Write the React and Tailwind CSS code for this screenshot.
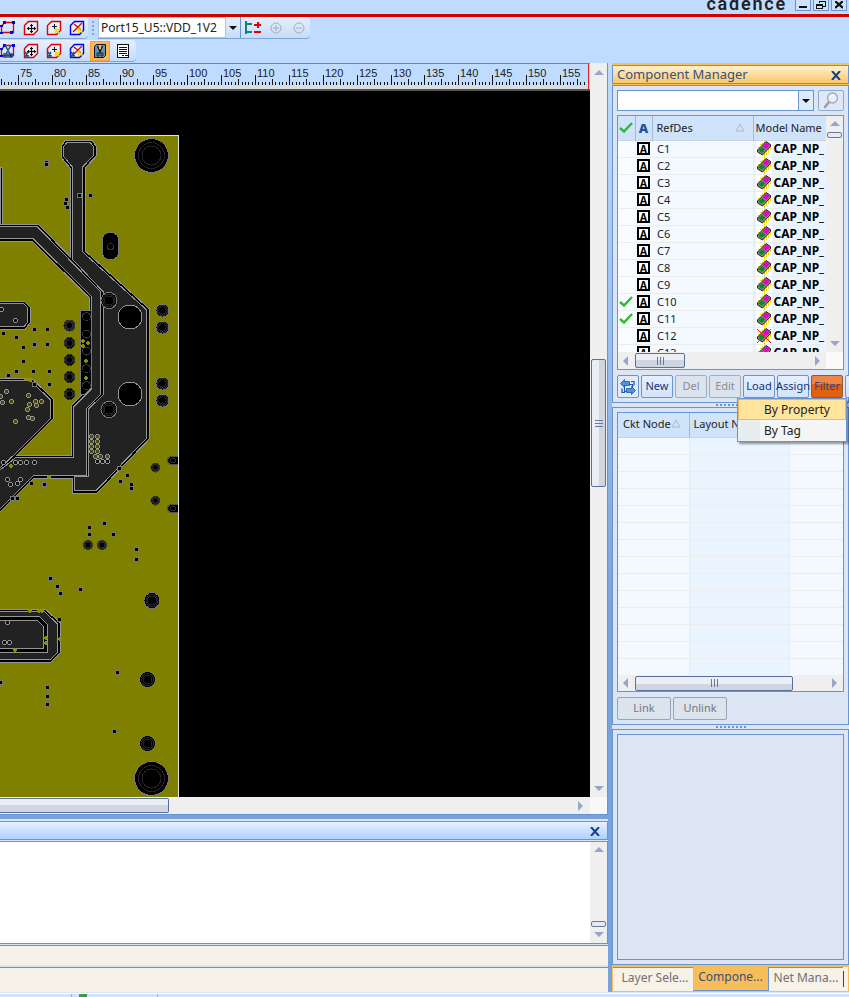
const rows = ['C1', 'C2', 'C3', 'C4', 'C5', 'C6', 'C7', 'C8', 'C9', 'C10', 'C11', 'C12', 'C13'];
const checked = ['C10', 'C11'];

const pours = [
  '-8,227 37,227 100,292 100,394 86,408 86,475 33,475 -8,516 -8,477 16,458 74,458 74,407 92,389 92,296 33,238 -8,238',
  '64,147 67,143 90,143 93,147 93,155 82,167 82,252 146,310 146,438 96,490 75,490 75,477 89,477 89,409 104,395 104,292 73,259 73,167 64,156',
  '-8,381 30,381 50,400 50,418 12,456 -8,475',
  '-8,304 23,304 27,308 27,322 24,326 -8,326',
  '-8,612 44,612 57,624 57,652 50,659 -8,659',
];

const pads = [
  [151.5, 155.5, 17], [151.5, 778.5, 17], [109, 300.5, 8], [109, 409.5, 8],
  [162.5, 310.5, 6.5], [162.5, 327.5, 6.5], [162.5, 383.5, 6.5], [162.5, 400.5, 6.5],
  [69.5, 325.5, 5.5], [69.5, 343, 5.5], [69.5, 360, 5.5], [69.5, 377, 5.5], [69.5, 394, 5.5],
  [155.5, 467.5, 4.5], [155.5, 500.5, 4.5], [88, 545, 4.5], [102, 545, 4.5],
  [152, 600.5, 8], [147.5, 679.5, 8], [147.5, 743.5, 8],
];

const dots = [
  [46, 162], [46, 164], [66, 199], [65, 203], [67, 207], [79, 195], [90, 195], [34, 329], [47, 329], [34, 344], [47, 344],
  [16, 337], [23, 347], [23, 361], [16, 371], [33, 371], [49, 371], [49, 384], [34, 384], [8, 375], [127, 475],
  [120, 481], [131, 484], [131, 488], [89, 527], [89, 534], [104, 523], [113, 534], [136, 549], [136, 559],
  [50, 578], [44, 484], [31, 483], [12, 498], [17, 498], [57, 586], [60, 593], [80, 589], [59, 619],
  [117, 672], [0, 682], [47, 687], [47, 696], [47, 704], [114, 731], [119, 468], [3, 333],
];

const vias = [
  [6, 391], [2, 402], [11, 401], [0, 396], [28, 395], [29, 404], [35, 401], [36, 405], [41, 401], [27, 409], [28, 417],
  [32, 418], [15, 421], [3, 462], [15, 462], [20, 462], [26, 462], [34, 462], [7, 479], [10, 484], [17, 483],
  [20, 479], [91, 436], [97, 436], [91, 441], [97, 441], [91, 446], [97, 446], [91, 451], [97, 451], [95, 456],
  [100, 456], [107, 456], [97, 461], [102, 461], [107, 461], [1, 309], [15, 320], [7, 622], [4, 642], [9, 642],
];

const sparks = [
  [82, 340], [87, 342], [82, 345], [85, 360], [85, 377], [10, 465], [48, 476], [29, 379], [25, 378],
  [29, 610], [38, 610], [41, 610], [45, 637], [45, 642], [14, 649], [59, 638],
];

function Board() {
  return (
    <svg width="590" height="706" viewBox="0 91 590 706" shapeRendering="crispEdges" className="block max-w-none">
      <rect x="-2" y="135.5" width="180.5" height="680" fill="#808000" stroke="#e4e4e4" />
      <path d="M0 167h2v60h-2z" fill="#000" stroke="#909090" />
      {pours.map((p) => (
        <polygon key={p} points={p} fill="none" stroke="#949494" strokeWidth="7" />
      ))}
      {pours.map((p) => (
        <polygon key={p} points={p} fill="none" stroke="#000" strokeWidth="5" />
      ))}
      {pours.map((p) => (
        <g key={p}>
          <polygon points={p} fill="none" stroke="#949494" strokeWidth="2" />
          <polygon points={p} fill="#222" />
        </g>
      ))}
      <g fill="none">
        <path d="M-5 618h43l7 7v25h-50" stroke="#949494" strokeWidth="5" />
        <path d="M-5 618h43l7 7v25h-50" stroke="#000" strokeWidth="3" />
      </g>
      <path d="M80.500 310.500h11v77l-7 7h-4z" fill="#000" stroke="#777" />
      {[316.5, 334, 351, 368.5, 385.5].map((y) => (
        <circle key={y} cx="86.5" cy={y} r="4" fill="#000" stroke="#3a3a3a" />
      ))}
      {[317, 394].map((y) => (
        <circle key={y} cx="130" cy={y} r="12" fill="#000" stroke="#949494" />
      ))}
      {pads.map(([x, y, r]) => (
        <g key={x + '-' + y} fill="none" stroke="#262626">
          <circle cx={x} cy={y} r={r} fill="#000" stroke={r < 6 ? '#333' : '#777'} />
          <circle cx={x} cy={y} r={r * 0.76} />
          <circle cx={x} cy={y} r={r * 0.56} />
        </g>
      ))}
      <rect x="102.500" y="232.500" width="16" height="27" rx="7" fill="#000" stroke="#777" />
      <circle cx="110.500" cy="246.500" r="3" fill="none" stroke="#333" />
      {[456.5, 504.5].map((y) => (
        <g key={y} fill="#000" stroke="#555">
          <path d={`M178 ${y}h-8l-3 3v2l3 3h8`} />
          <circle cx="173" cy={y + 4} r="2.5" stroke="#333" />
        </g>
      ))}
      {dots.map(([x, y]) => (
        <g key={x + '-' + y}>
          <rect x={x - 2} y={y - 2} width="5" height="5" rx="1" fill="#777" />
          <rect x={x - 1} y={y - 1} width="3" height="3" fill="#000" />
        </g>
      ))}
      {vias.map(([x, y]) => (
        <circle key={x + '-' + y} cx={x + 0.5} cy={y + 0.5} r="2" fill={y > 385 && y < 458 ? '#4c4c08' : '#111'} stroke="#949494" />
      ))}
      {sparks.map(([x, y]) => (
        <path key={x + '-' + y} d={`M${x - 1} ${y}h4v2h-4zM${x} ${y - 1}h2v4h-2z`} fill="#8f8f00" />
      ))}
    </svg>
  );
}

const STEP = 33.87;

function Ruler() {
  const ticks = [];
  for (let i = -6; i < 168; i++) {
    ticks.push({ x: Math.round(18 + (i * STEP) / 10), h: i % 10 === 0 ? 10 : i % 5 === 0 ? 6 : 3 });
  }
  const labels = [];
  for (let n = 0; n < 17; n++) labels.push({ x: Math.round(20 + n * STEP), v: 75 + n * 5 });
  return (
    <div className="h-7 shrink-0 overflow-hidden border-t border-b-2 border-t-[#808080] border-b-[#555] bg-[#dcdcdc]">
      <svg width="590" height="25" className="block max-w-none">
        <rect width="590" height="21" fill="#bfdbff" />
        <g shapeRendering="crispEdges">
          {ticks.map((t) => (
            <rect key={t.x} x={t.x} y={21 - t.h} width="1" height={t.h} fill="#111" />
          ))}
        </g>
        {labels.map((l) => (
          <text key={l.v} x={l.x} y="13" fontSize="11" fontFamily="Liberation Sans, sans-serif" fill="#222">{l.v}</text>
        ))}
        <rect x="588" width="1" height="25" fill="#e02020" />
      </svg>
    </div>
  );
}

const arrowShapes = {
  up: 'M4 0L9 5H-1z',
  down: 'M4 5L9 0H-1z',
  left: 'M0 4L5 -1V9z',
  right: 'M5 4L0 -1V9z',
};

function Arrow({ dir, label }) {
  return (
    <button aria-label={label || dir} className="flex h-4 w-4 shrink-0 items-center justify-center">
      <svg width="10" height="10" viewBox={dir === 'up' || dir === 'down' ? '-1 -2 10 10' : '-2 -1 10 10'}>
        <path d={arrowShapes[dir]} fill="#98a5cb" />
      </svg>
    </button>
  );
}

function Grip({ vertical }) {
  return (
    <span className={vertical ? 'flex flex-col gap-0.5' : 'flex gap-0.5'}>
      {[0, 1, 2].map((i) => (
        <span key={i} className={vertical ? 'h-px w-2 bg-[#66789f]' : 'h-2 w-px bg-[#66789f]'} />
      ))}
    </span>
  );
}

const hThumb = 'flex h-[15px] items-center justify-center rounded-xs border border-[#5a6f9f] bg-linear-to-b from-[#eceef3] from-50% to-[#cfd6e2] to-50%';

const vTrack = 'flex w-[17px] shrink-0 flex-col items-center bg-[#efefef]';
const vThin = 'h-1.5 w-[15px] rounded-xs border border-[#66789f] bg-[#e6e9f0]';

/* toolbar glyphs */

function Shape({ variant, color, cut }) {
  return (
    <svg width="16" height="16" viewBox="0 0 16 16" fill="none">
      {variant === 'nodes' ? (
        <>
          <path d="M4.500 2.500h9v10h-12v-6z" stroke="#e00000" strokeWidth="1.300" />
          <path d="M3 1h3v3H3zM12 1h3v3h-3zM10 11h3v3h-3zM0 12h3v2H0zM0 5h3v2H0z" fill="#0000e0" />
        </>
      ) : (
        <path d="M5.500 1.500h9v9l-4 4h-9v-9z" stroke={color} strokeWidth="1.400" fill="#e7effb" />
      )}
      {variant === 'move' && (
        <path d="M8.500 4v9M4 8.500h9M7 5.500h3M7 11.500h3M5.500 7v3M11.500 7v3" stroke="#111" strokeWidth="1.200" />
      )}
      {variant === 'point' && (
        <>
          <path d="M9 9l5 5M9.500 8v5M9 9.500h5" stroke="#f0e000" strokeWidth="1.500" />
          <path d="M8 4v5h1V4zM6 6v1h5V6z" fill="#111" />
        </>
      )}
      {variant === 'slash' && (
        <>
          <path d="M4 12l9-9M5 4l7 6" stroke="#e00000" strokeWidth="1.300" />
          <path d="M9 8l5 5M9.500 9v4" stroke="#f0e000" strokeWidth="1.500" />
        </>
      )}
      {cut && variant === 'nodes' && (
        <path d="M5 2l5 9M11 2L6 11M4 11h3v3H4zM9 11h3v3H9z" stroke="#24507c" strokeWidth="1.500" />
      )}
      {cut && variant !== 'nodes' && (
        <path d="M1 8l4 5M5 9l-3 5M1 13h2v2M4 13h2" stroke="#24507c" strokeWidth="1.500" />
      )}
    </svg>
  );
}

function ToolButton({ label, children }) {
  return <button aria-label={label} className="flex h-5 w-[23px] shrink-0 items-center justify-center">{children}</button>;
}

const tools = [
  { variant: 'nodes', color: '#e00000' },
  { variant: 'move', color: '#e00000' },
  { variant: 'point', color: '#e00000' },
  { variant: 'slash', color: '#0000e0' },
];

const barFill = 'flex h-[22px] items-center rounded-r-sm border-b border-[#7fa4d8] bg-linear-to-b from-[#e6f0fd] to-[#c6dcfb]';

function Toolbars() {
  return (
    <div className="flex h-[46px] shrink-0 flex-col gap-px bg-[#bfdbff]">
      <div className="flex">
        <div className={barFill}>
          <div className="-ml-1 flex">
            {tools.map((t) => (
              <ToolButton key={t.variant} label={t.variant}><Shape {...t} /></ToolButton>
            ))}
          </div>
        </div>
        <div className="flex w-2.5 flex-col items-center justify-center gap-0.5">
          {[0, 1, 2, 3].map((i) => <span key={i} className="h-0.5 w-0.5 bg-[#7fa4d8]" />)}
        </div>
        <div className={barFill}>
          <input
            aria-label="Port"
            defaultValue="Port15_U5::VDD_1V2"
            className="h-[21px] w-32 border border-[#a9c6ee] bg-white pl-0.5 text-[12px] text-[#222] outline-none"
          />
          <button aria-label="Choose port" className="flex h-[21px] w-[15px] items-center justify-center border-r border-[#6a94d0]">
            <svg width="8" height="4"><path d="M0 0h8L4 4z" fill="#111" /></svg>
          </button>
          <ToolButton label="Port polarity">
            <svg width="18" height="14" viewBox="0 0 18 14" fill="none" shapeRendering="crispEdges">
              <path d="M2 0v13M2 3h6M2 11h6" stroke="#0d8080" strokeWidth="2" />
              <path d="M10 4h7M13.500 1v6M10 11h7" stroke="#e00000" strokeWidth="2" />
            </svg>
          </ToolButton>
          <ToolButton label="Zoom in">
            <svg width="12" height="12" viewBox="0 0 12 12" fill="none" stroke="#a9acb2"><circle cx="6" cy="6" r="5" /><path d="M3 6h6M6 3v6" /></svg>
          </ToolButton>
          <ToolButton label="Zoom out">
            <svg width="12" height="12" viewBox="0 0 12 12" fill="none" stroke="#a9acb2"><circle cx="6" cy="6" r="5" /><path d="M3 6h6" /></svg>
          </ToolButton>
        </div>
      </div>
      <div className="flex">
        <div className={barFill}>
          <div className="-ml-1 flex">
            {tools.map((t) => (
              <ToolButton key={t.variant} label={'cut ' + t.variant}><Shape {...t} cut /></ToolButton>
            ))}
          </div>
          <button aria-label="Cut mode" className="ml-0.5 flex h-5 w-5 items-center justify-center border border-[#f0a040] bg-[#ffb457]">
            <svg width="14" height="16" viewBox="0 0 14 16" fill="none">
              <path d="M3.500 1.500h9v11l-2 2h-9v-11z" fill="#5f96b4" stroke="#111" />
              <path d="M4.500 3l3 7M9.500 3l-3 7" stroke="#111" strokeWidth="1.200" />
              <path d="M6 2h2v4H6z" fill="#ffb457" />
              <path d="M4 10h2v3H4zM8 10h2v3H8z" stroke="#111" strokeWidth="0.800" fill="#5f96b4" />
            </svg>
          </button>
          <button aria-label="Report" className="mx-1 flex h-5 w-[18px] items-center justify-center">
            <svg width="14" height="16" viewBox="0 0 14 16" shapeRendering="crispEdges">
              <path d="M1.500 1.500h11v13h-11z" fill="#fff" stroke="#111" />
              <path d="M3 4.500h8M3 6.500h8M3 8.500h8M3 10.500h8M6 12.500h2M9 12.500h3" stroke="#111" />
            </svg>
          </button>
        </div>
      </div>
    </div>
  );
}

function TitleBar() {
  const winButton = 'flex h-[11px] w-4 items-center justify-center border border-t-0 border-[#6a94d0] bg-[#cfe2fc]';
  return (
    <header className="flex h-[17px] shrink-0 items-start justify-end overflow-hidden border-b-3 border-[#d00000] bg-[#bfdbff] pr-0.5">
      <span className="-mt-2 mr-2 font-[Roboto,sans-serif] text-[18px] leading-6 font-semibold tracking-widest text-[#222]">cadence</span>
      <div className="flex gap-0.5">
        <button aria-label="Minimize" className={winButton}><svg width="8" height="8"><path d="M0 5h8v2H0z" fill="#111" /></svg></button>
        <button aria-label="Restore" className={winButton}>
          <svg width="10" height="9" fill="none" stroke="#111" shapeRendering="crispEdges"><path d="M3.500 2V0.500h6v5H7M0.500 3.500h6v4h-6zM1 4.500h6" /></svg>
        </button>
        <button aria-label="Close" className={winButton}><svg width="8" height="8"><path d="M0 0l8 7M8 0L0 7" stroke="#111" strokeWidth="2.200" /></svg></button>
      </div>
    </header>
  );
}

function CloseX({ label }) {
  return (
    <button aria-label={label} className="flex h-4 w-5 items-center justify-center">
      <svg width="10" height="9" viewBox="0 0 10 9"><path d="M1 0l8 9M9 0L1 9" stroke="#173f86" strokeWidth="2" /></svg>
    </button>
  );
}

function Workspace() {
  return (
    <div className="flex min-w-0 flex-1 flex-col">
      <div className="flex min-h-0 flex-1 border-r border-b border-[#6a94d0]">
        <div className="flex min-w-0 flex-1 flex-col">
          <Ruler />
          <div className="min-h-0 flex-1 overflow-hidden bg-black"><Board /></div>
          <div className="flex h-[17px] shrink-0 items-center bg-[#efefef] pr-px">
            <span className={hThumb + ' w-[169px] rounded-l-none border-l-0'} />
            <span className="flex-1" />
            <Arrow dir="right" label="Scroll right" />
          </div>
        </div>
        <div className={vTrack + ' pt-0.5'}>
          <Arrow dir="up" label="Scroll up" />
          <span className="h-[278px]" />
          <span className="flex h-32 w-[15px] items-center justify-center rounded-xs border border-[#5a6f9f] bg-linear-to-r from-[#eceef3] from-50% to-[#cfd6e2] to-50%">
            <Grip vertical />
          </span>
          <span className="flex-1" />
          <Arrow dir="down" label="Scroll down" />
          <span className="h-[17px] w-full bg-[#f8f8f8]" />
        </div>
      </div>
      <div className="h-1 shrink-0 bg-[#78a2dc]" />
      <div className="h-0.5 shrink-0 bg-[#dbe5f3]" />
      <div className="flex h-[19px] shrink-0 items-end justify-end border border-l-0 border-[#6a94d0] bg-linear-to-b from-[#e6f1ff] to-[#b0d1fd] pr-0.5">
        <CloseX label="Close output" />
      </div>
      <div className="mt-px flex h-[103px] shrink-0 border border-l-0 border-[#6a94d0]">
        <textarea aria-label="Output" readOnly className="min-w-0 flex-1 resize-none bg-white outline-none" />
        <div className={vTrack}>
          <Arrow dir="up" />
          <span className="flex-1" />
          <span className={vThin} />
          <Arrow dir="down" />
        </div>
      </div>
      <div className="mt-px h-5 shrink-0 border-t border-[#6a94d0] bg-[#f6f2e8]" />
      <div className="mt-0.5 h-[25px] shrink-0 border-t border-[#6a94d0] bg-[#f6f2e8]" />
    </div>
  );
}

function Check() {
  return (
    <svg width="14" height="11" viewBox="0 0 14 11" className="ml-px block">
      <path d="M1 6l4 3.500L13 1" fill="none" stroke="#2bbd2b" strokeWidth="2.400" />
    </svg>
  );
}

function Chip({ crossed }) {
  return (
    <svg width="16" height="16" viewBox="0 0 16 16" className="block shrink-0 bg-white">
      <path d="M1 8.500h2M2 6.500h2M4 3.500h2M6.500 1.500v2M8.500 0v2" stroke="#e8d800" fill="none" />
      <path d="M14.500 5v4M12.500 8v4M10.500 10v4M8.500 12v4" stroke="#e8d800" fill="none" />
      <path d="M10 0.500l4.500 3v2L6.500 14l-5-3V9z" fill="#8a8a8a" stroke="#222" />
      <path d="M10 1.500l4 2.500-3.500 4L6.500 5.500z" fill="#e800c8" />
      <path d="M6 6l3.500 2.500L6 12 2.500 9.500z" fill="#0a8a20" />
      {crossed && <path d="M1 1l14 14M15 1L1 15" stroke="#f02020" />}
    </svg>
  );
}

function SortMark() {
  return <svg width="10" height="9" fill="none" className="shrink-0"><path d="M5 1l4 7H1z" stroke="#aab9cc" /></svg>;
}

function ComponentTable() {
  return (
    <div className="flex h-[255px] shrink-0 flex-col border border-[#6a94d0] bg-[#f4f9ff]">
      <div className="flex min-h-0 flex-1">
        <div className="min-w-0 flex-1 overflow-hidden">
          <table className="w-full table-fixed border-collapse text-[11px] leading-4 text-[#222]">
            <colgroup>
              <col className="w-[17px]" />
              <col className="w-[17px]" />
              <col className="w-[101px]" />
              <col />
            </colgroup>
            <thead>
              <tr className="h-6 border-b border-[#c8d4e2] bg-linear-to-b from-[#cfe5ff] to-[#cfe2f6] text-left">
                <th aria-label="Assigned" className="border-r border-[#a9b8cc]"><Check /></th>
                <th className="border-r border-[#a9b8cc] text-center text-[13px] font-black text-[#28509a]">A</th>
                <th className="border-r border-[#a9b8cc] pr-2 pl-1 font-normal">
                  <span className="flex items-center justify-between">RefDes <SortMark /></span>
                </th>
                <th className="overflow-hidden pl-0.5 font-normal whitespace-nowrap">Model Name</th>
              </tr>
            </thead>
            <tbody>
              {rows.map((r) => (
                <tr key={r} className="h-[17px] border-b border-[#ececec]">
                  <td className="bg-[#f8fbff]">{checked.includes(r) && <Check />}</td>
                  <td>
                    <span className="mx-auto flex h-[13px] w-[13px] items-center justify-center border-2 border-black bg-white text-[10px] leading-3 font-bold text-black">A</span>
                  </td>
                  <td className="border-r border-[#ececec] pl-[5px]">{r}</td>
                  <td className="overflow-hidden bg-[#e9f4ff] pl-0.5 whitespace-nowrap">
                    <span className="flex h-4 items-center gap-0.5 text-[12px] font-bold text-black">
                      <Chip crossed={r === 'C12'} />CAP_NP_
                    </span>
                  </td>
                </tr>
              ))}
            </tbody>
          </table>
        </div>
        <div className={vTrack}>
          <Arrow dir="up" />
          <span className={vThin} />
          <span className="flex-1" />
          <Arrow dir="down" />
        </div>
      </div>
      <div className="flex h-[17px] shrink-0 items-center bg-[#efefef]">
        <Arrow dir="left" />
        <span className={hThumb + ' ml-px w-[50px]'}><Grip /></span>
        <span className="flex-1" />
        <Arrow dir="right" />
        <span className="h-full w-[17px] bg-[#fafafa]" />
      </div>
    </div>
  );
}

const btn = 'flex h-[23px] w-8 shrink-0 items-center justify-center rounded-xs border text-[11px] whitespace-nowrap';
const btnOn = btn + ' border-[#6a94d0] bg-linear-to-b from-[#e6f0fd] to-[#d2e3fa] text-[#15357a]';
const btnOff = btn + ' border-[#a3aebd] bg-[#dbe3ed] text-[#8a8d92]';
const linkBtn = 'h-[23px] w-[54px] rounded-xs border border-[#98a6b8] bg-[#dbe3ed] text-[11px] text-[#75777c]';

function ButtonRow() {
  return (
    <div className="relative mt-[5px]">
      <div className="-mr-[5px] flex gap-0.5 overflow-hidden">
        <button aria-label="Refresh" className="flex h-[23px] w-[22px] shrink-0 items-center justify-center rounded-xs border border-[#6a94d0] bg-[#dfeafa]">
          <svg width="16" height="16" viewBox="0 0 16 16" fill="#4f93dc" stroke="#1d559f" strokeWidth="0.800">
            <path d="M4.500 5.500h8v7h-8z" fill="#dfeafa" strokeWidth="1.200" />
            <path d="M0.500 4.500l4-4v2h5v4h-5v2z" />
            <path d="M15.500 11.500l-4-4v2h-5v4h5v2z" />
            <path d="M2 9.500v4h3M14 6.500v-4h-3" fill="none" strokeWidth="1.200" />
          </svg>
        </button>
        <button className={btnOn}>New</button>
        <button disabled className={btnOff}>Del</button>
        <button disabled className={btnOff}>Edit</button>
        <button className={btnOn}>Load</button>
        <button className={btnOn}>Assign</button>
        <button className={btn + ' border-[#8a5a3a] bg-linear-to-b from-[#ee8548] from-40% to-[#e2600e] to-40% text-[#3a4474]'}>Filter</button>
        <button aria-label="Tag" className={btnOn} />
      </div>
      <div role="menu" className="absolute top-[23px] -right-[3px] z-10 w-[110px] border border-[#6a94d0] bg-[#f5f5f5] shadow-[2px_2px_2px_rgba(0,0,0,0.4)]">
        <button role="menuitem" className="block h-[21px] w-full border border-[#f0b860] bg-[#ffe49c] pl-[25px] text-left text-[12px] leading-4 text-[#222]">By Property</button>
        <button role="menuitem" className="block h-[21px] w-full border-l-[22px] border-[#e8eeef] pl-1 text-left text-[12px] leading-4 text-[#222]">By Tag</button>
      </div>
    </div>
  );
}

function Splitter() {
  return (
    <div className="flex h-1 shrink-0 items-center justify-center gap-0.5 bg-[#dbe5f3]">
      {[0, 1, 2, 3, 4, 5, 6, 7].map((i) => <span key={i} className="h-0.5 w-0.5 bg-[#6a94d0]" />)}
    </div>
  );
}

function NodeTable() {
  const lines = Array.from({ length: 14 }, (_, i) => i);
  return (
    <div className="flex h-[280px] shrink-0 flex-col border border-[#6a94d0] bg-[#f4f9ff]">
      <div className="min-h-0 flex-1 overflow-hidden">
        <table className="w-full table-fixed border-collapse text-[11px] leading-4 text-[#222]">
          <colgroup>
            <col className="w-[71px]" />
            <col className="w-[100px]" />
            <col />
          </colgroup>
          <thead>
            <tr className="h-6 border-b border-[#c8d4e2] bg-linear-to-b from-[#cfe5ff] to-[#cfe2f6] text-left">
              <th className="border-r border-[#a9b8cc] pb-0.5 pl-[5px] font-normal whitespace-nowrap">
                <span className="flex items-center">Ckt Node <SortMark /></span>
              </th>
              <th className="border-r border-[#a9b8cc] pb-0.5 pl-1 font-normal">Layout Node</th>
              <th />
            </tr>
          </thead>
          <tbody>
            {lines.map((i) => (
              <tr key={i} className="h-[17px] border-b border-[#ececec]">
                <td className="border-r border-[#ececec]" />
                <td className="border-r border-[#ececec] bg-[#e9f4ff]" />
                <td />
              </tr>
            ))}
          </tbody>
        </table>
      </div>
      <div className="flex h-4 shrink-0 items-center bg-[#efefef]">
        <Arrow dir="left" />
        <span className={hThumb + ' ml-px w-[158px]'}><Grip /></span>
        <span className="flex-1" />
        <Arrow dir="right" />
      </div>
    </div>
  );
}

function ComponentManager() {
  const tab = 'h-6 pb-1 text-[12px] whitespace-nowrap';
  return (
    <aside className="flex w-[237px] shrink-0 flex-col bg-[#dbe5f3]">
      <div className="h-0.5 shrink-0 bg-[#f7bd58]" />
      <div className="flex h-[19px] shrink-0 items-end justify-between border border-[#6a94d0] bg-linear-to-b from-[#fff1cf] to-[#f8c766] pr-0.5 pl-1">
        <h2 className="text-[13px] leading-[18px] text-[#38507c]">Component Manager</h2>
        <CloseX label="Close Component Manager" />
      </div>
      <div className="h-px shrink-0 bg-[#f7bd58]" />
      <section className="shrink-0 border border-[#6a94d0] px-1 pt-1 pb-1">
        <div className="mb-1 flex gap-1">
          <div className="flex h-[21px] flex-1 border border-[#6a94d0] bg-white">
            <input aria-label="Search components" className="min-w-0 flex-1 px-1 text-[11px] outline-none" />
            <button aria-label="Search history" className="flex w-[15px] items-center justify-center border-l border-[#6a94d0] bg-[#dcebff]">
              <svg width="8" height="4"><path d="M0 0h8L4 4z" fill="#111" /></svg>
            </button>
          </div>
          <button aria-label="Search" className="flex h-[21px] w-[26px] items-center justify-center rounded-xs border border-[#8fa9cf] bg-[#dfe8f5]">
            <svg width="16" height="17" viewBox="0 0 16 17" fill="none">
              <path d="M6 10L2 15" stroke="#9a9da3" strokeWidth="2.500" strokeLinecap="round" />
              <circle cx="9.500" cy="6" r="5" fill="#e2effc" stroke="#a3a9b2" strokeWidth="1.300" />
              <path d="M7 5a3 3 0 0 1 3-2" stroke="#fff" strokeWidth="1.300" />
            </svg>
          </button>
        </div>
        <ComponentTable />
        <ButtonRow />
      </section>
      <Splitter />
      <section className="shrink-0 border border-[#6a94d0] p-1">
        <NodeTable />
        <div className="mt-[5px] flex gap-0.5">
          <button disabled className={linkBtn}>Link</button>
          <button disabled className={linkBtn}>Unlink</button>
        </div>
      </section>
      <Splitter />
      <section className="flex min-h-0 flex-1 flex-col border border-[#6a94d0] p-1">
        <div className="flex-1 border border-[#6a94d0]" />
      </section>
      <div className="flex h-[27px] shrink-0 border border-t-2 border-[#f7bd58] bg-[#f6f2e8] text-[#707070]">
        <button className={tab + ' w-20 border-t border-[#6a94d0] pl-1'}>Layer Sele...</button>
        <button className={tab + ' w-[76px] border-r border-b border-[#6a94d0] bg-[#f7bd58] text-[#38507c]'}>Compone...</button>
        <button className={tab + ' flex-1 border-t border-[#6a94d0]'}>Net Mana...</button>
        <span className="my-1 mr-1 w-px bg-[#444]" />
      </div>
    </aside>
  );
}

export default function App() {
  return (
    <div className="flex h-screen flex-col overflow-hidden bg-[#dbe5f3] font-['Noto_Sans',sans-serif]">
      <TitleBar />
      <Toolbars />
      <main className="flex min-h-0 flex-1">
        <Workspace />
        <div className="w-1 shrink-0 bg-linear-to-b from-[#bfdbff] to-[#78a2dc] to-60%" />
        <ComponentManager />
      </main>
      <footer className="mt-px flex h-1 shrink-0 border-t border-white bg-[#cfe3ff]">
        <span className="w-[72px] border-r border-[#8fb4e8]" />
        <span className="ml-[7px] h-full w-2 bg-[#3f9a3f]" />
        <span className="w-[71px] border-r border-[#8fb4e8]" />
      </footer>
    </div>
  );
}
